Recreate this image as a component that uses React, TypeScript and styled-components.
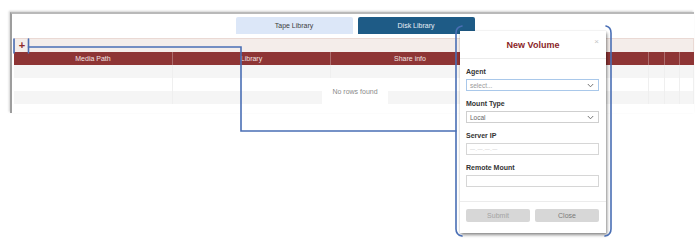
import React from "react";
import styled, { createGlobalStyle } from "styled-components";

const GlobalStyle = createGlobalStyle`
  html, body {
    margin: 0;
    padding: 0;
    background: #fff;
  }
  body {
    font-family: "Liberation Sans", Arial, sans-serif;
  }
`;

const headerColumns = ["Media Path", "Library", "Share info", "", "", "", ""];
const columnTemplate = "159px 158px 159px 159px 16px 15px 14px";

const Chevron: React.FC = () => (
  <svg width="7" height="5" viewBox="0 0 7 5">
    <path d="M0.8 1 L3.5 3.8 L6.2 1" fill="none" stroke="#666" strokeWidth="0.9" />
  </svg>
);

const Annotations: React.FC = () => (
  <Overlay width="700" height="246" viewBox="0 0 700 246">
    <g fill="none" stroke="#4a6fb5" strokeWidth="1.6" strokeLinecap="round">
      <path d="M14 39 L14 53" />
      <path d="M28.5 39 L28.5 53" />
      <path d="M28.5 47 L241 47 L241 131 L456 131" />
      <path d="M462 26 Q456 27 456 33 L456 229 Q456 235 462 236" />
      <path d="M606 26 Q611 27 611 33 L611 229 Q611 235 605 236" />
    </g>
  </Overlay>
);

const App: React.FC = () => {
  return (
    <Page>
      <GlobalStyle />
      <Frame>
        <Tabs>
          <Tab>Tape Library</Tab>
          <Tab $active>Disk Library</Tab>
        </Tabs>
        <Table>
          <Toolbar>
            <AddButton>+</AddButton>
          </Toolbar>
          <HeaderRow>
            {headerColumns.map((c, i) => (
              <HeaderCell key={i}>{c}</HeaderCell>
            ))}
          </HeaderRow>
          <Body>
            {[0, 1, 2].map((r) => (
              <BodyRow key={r} $odd={r % 2 === 1}>
                {headerColumns.map((_, i) => (
                  <BodyCell key={i} />
                ))}
              </BodyRow>
            ))}
            <NoRows>No rows found</NoRows>
          </Body>
        </Table>
      </Frame>

      <Modal>
        <ModalHeader>
          <ModalTitle>New Volume</ModalTitle>
          <CloseX>×</CloseX>
        </ModalHeader>
        <ModalBody>
          <Field>
            <Label>Agent</Label>
            <Select $focused>
              <span>select...</span>
              <Chevron />
            </Select>
          </Field>
          <Field>
            <Label>Mount Type</Label>
            <Select>
              <SelectValue>Local</SelectValue>
              <Chevron />
            </Select>
          </Field>
          <Field>
            <Label>Server IP</Label>
            <Input>
              <Placeholder>—.—.—.—</Placeholder>
            </Input>
          </Field>
          <Field>
            <Label>Remote Mount</Label>
            <Input />
          </Field>
        </ModalBody>
        <ModalFooter>
          <FooterButton>Submit</FooterButton>
          <FooterButton $dark>Close</FooterButton>
        </ModalFooter>
      </Modal>

      <Annotations />
    </Page>
  );
};

const Page = styled.div`
  position: relative;
  width: 700px;
  height: 246px;
  overflow: hidden;
  padding: 12px 0 0 10px;
  box-sizing: border-box;
`;

const Frame = styled.div`
  width: 682px;
  height: 96px;
  border-top: 2px solid #b9b9b9;
  border-left: 2px solid #9d9d9d;
  box-shadow: -1px -1px 2px rgba(0, 0, 0, 0.18);
  padding-top: 3px;
  box-sizing: content-box;
  background: #fff;
`;

const Tabs = styled.div`
  display: flex;
  justify-content: center;
  gap: 5px;
  padding-left: 4px;
`;

const Tab = styled.div<{ $active?: boolean }>`
  width: 117px;
  height: 17px;
  display: flex;
  align-items: center;
  justify-content: center;
  font-size: 7px;
  border-radius: 2px 2px 0 0;
  background: ${(p) => (p.$active ? "#1e5b86" : "#dce7f8")};
  color: ${(p) => (p.$active ? "#e9eff6" : "#3d3d3d")};
`;

const Table = styled.div`
  margin: 4px 0 0 2px;
  width: 680px;
`;

const Toolbar = styled.div`
  height: 13px;
  display: flex;
  align-items: center;
  padding-left: 1px;
  background: #f4edea;
  border: 1px solid #ead9d4;
  border-bottom: none;
`;

const AddButton = styled.div`
  width: 12px;
  height: 12px;
  display: flex;
  align-items: center;
  justify-content: center;
  font-size: 11px;
  font-weight: bold;
  line-height: 1;
  color: #8e2a2a;
`;

const HeaderRow = styled.div`
  display: grid;
  grid-template-columns: ${columnTemplate};
  height: 13px;
  background: #8e3535;
`;

const HeaderCell = styled.div`
  display: flex;
  align-items: center;
  justify-content: center;
  font-size: 7px;
  color: #f1e3e3;
  border-right: 1px solid rgba(255, 255, 255, 0.28);
  &:last-child {
    border-right: none;
  }
`;

const Body = styled.div`
  position: relative;
`;

const BodyRow = styled.div<{ $odd: boolean }>`
  display: grid;
  grid-template-columns: ${columnTemplate};
  height: 13px;
  background: ${(p) => (p.$odd ? "#ffffff" : "#f5f5f5")};
`;

const BodyCell = styled.div`
  border-right: 1px solid #efefef;
`;

const NoRows = styled.div`
  position: absolute;
  left: 308px;
  top: 13px;
  width: 66px;
  height: 26px;
  background: #fff;
  display: flex;
  align-items: center;
  justify-content: center;
  font-size: 7px;
  color: #8a8a8a;
`;

const Modal = styled.div`
  position: absolute;
  left: 460px;
  top: 31px;
  width: 146px;
  height: 202px;
  background: #fff;
  box-shadow: 1px 2px 3px rgba(0, 0, 0, 0.45), 0 0 1px rgba(0, 0, 0, 0.15);
  display: flex;
  flex-direction: column;
`;

const ModalHeader = styled.div`
  position: relative;
  height: 27px;
  display: flex;
  align-items: center;
  justify-content: center;
  border-bottom: 1px solid #ececec;
`;

const ModalTitle = styled.div`
  font-size: 9px;
  font-weight: bold;
  color: #8b1f29;
`;

const CloseX = styled.div`
  position: absolute;
  right: 7px;
  top: 6px;
  font-size: 8px;
  color: #c4c4c4;
`;

const ModalBody = styled.div`
  display: flex;
  flex-direction: column;
  gap: 8px;
  padding: 8px 7px 14px 6px;
`;

const Field = styled.div`
  display: flex;
  flex-direction: column;
`;

const Label = styled.div`
  font-size: 7px;
  font-weight: bold;
  color: #333;
  line-height: 10px;
  margin-bottom: 2px;
`;

const Select = styled.div<{ $focused?: boolean }>`
  height: 12px;
  box-sizing: border-box;
  border: 1px solid ${(p) => (p.$focused ? "#a9c8ea" : "#cfcfcf")};
  display: flex;
  align-items: center;
  justify-content: space-between;
  padding: 0 4px 0 3px;
  font-size: 6.5px;
  color: #9a9a9a;
`;

const SelectValue = styled.span`
  color: #666;
`;

const Input = styled.div`
  height: 12px;
  box-sizing: border-box;
  border: 1px solid #d6d6d6;
  display: flex;
  align-items: center;
  padding: 0 3px;
`;

const Placeholder = styled.span`
  font-size: 5px;
  color: #c8c8c8;
  letter-spacing: 0.5px;
`;

const ModalFooter = styled.div`
  border-top: 1px solid #ececec;
  display: flex;
  gap: 5px;
  padding: 7px 7px 0 6px;
`;

const FooterButton = styled.div<{ $dark?: boolean }>`
  flex: 1;
  height: 13px;
  border-radius: 2px;
  background: #d7d7d7;
  display: flex;
  align-items: center;
  justify-content: center;
  font-size: 7px;
  color: ${(p) => (p.$dark ? "#7a7a7a" : "#a3a3a3")};
`;

const Overlay = styled.svg`
  position: absolute;
  left: 0;
  top: 0;
  pointer-events: none;
`;

export default App;
